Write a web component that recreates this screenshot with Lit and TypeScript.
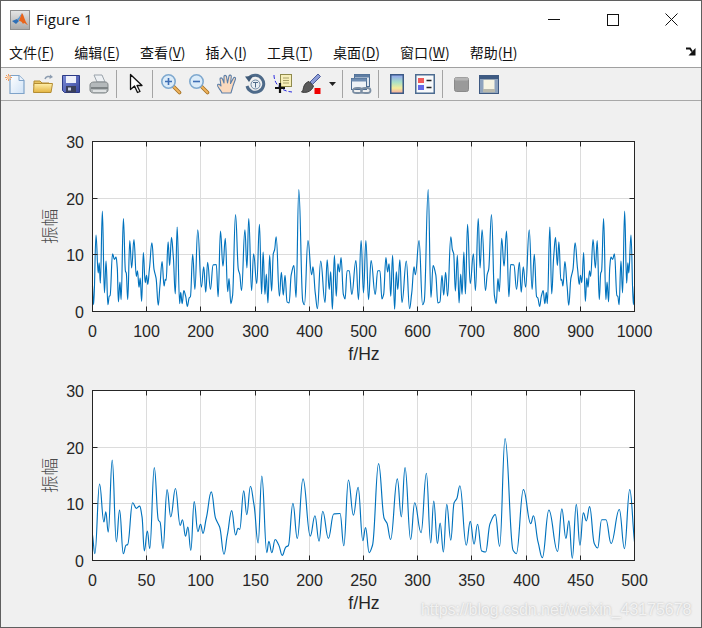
import { LitElement, html, css, svg } from "lit";
import { customElement, property } from "lit/decorators.js";

const RAW: number[][] = [[0,4.5],[2.2,1.2],[6.5,13.5],[10.5,6.8],[12.3,8.6],[14.5,5],[18.2,17.7],[22,3.3],[25,8.9],[28.4,1.2],[30.9,2.7],[32.4,2.8],[37,10.2],[40.4,9.2],[43.5,9.6],[45.7,7.7],[47.8,1.7],[50.6,5.2],[52.8,2.1],[57,16.4],[60.8,7.1],[62.3,6.8],[65,2.1],[68.8,12.5],[72.2,7.7],[76.5,12.7],[80.9,6.2],[83,7.2],[85.8,4.3],[88,5.9],[90.7,1.8],[93.8,10.4],[97.2,5.1],[99.7,6.4],[101.9,4.8],[105,7.5],[109.6,12.1],[113.6,7.4],[117.3,5.9],[121.3,1.1],[124.4,4.5],[128.4,8.8],[132,4.5],[134.3,5.7],[135.8,5.5],[139.5,12.3],[142.3,8.1],[145.7,13.1],[149,9.8],[152.8,3.1],[156.2,14.9],[160.8,1.4],[162.7,3.4],[165.4,1.4],[168.5,3.7],[171.9,2.7],[175,0.9],[178.4,2.4],[180.6,2.6],[184.9,10.1],[188.9,3.9],[194.2,14.4],[200.9,4.3],[205.2,7.9],[209,3.4],[212.4,8.7],[217.6,3.9],[222.5,8.2],[228.4,8.3],[231.8,2.6],[236.1,14.2],[240.7,8],[245,12.9],[249.4,3.5],[251.9,5.8],[255.2,1.4],[258.3,2.7],[263.9,17.1],[269.1,7.4],[271.6,6.6],[275,3.7],[281.2,14.4],[284.9,7.7],[288.3,16.4],[293.5,3.7],[297.2,10.2],[303.1,4.9],[308,15.4],[312,3.1],[314.8,10.5],[318.2,3],[320.7,6.6],[323.7,1.5],[326.8,9.9],[330.5,3.6],[333.6,10.2],[336,10.9],[338.9,13.2],[344.8,2.7],[348.5,6.9],[352,2.9],[355.2,6.4],[359,1.7],[362.7,1.5],[366.7,6.5],[371.6,8.1],[375.6,2.5],[380.6,21.5],[388,1.8],[391,1.2],[397.5,12.5],[404.3,6.5],[406.8,7.9],[411,3.3],[415,0.5],[421,8.9],[429,1.6],[433,9.1],[436.7,3.9],[439.5,7],[442.6,0.4],[446.3,9.9],[449.7,2.7],[452.8,8.4],[455.6,7],[458.6,9.5],[462.9,3],[466,2.2],[469.7,7.2],[473.7,7.2],[478.4,3],[486,9],[490.7,2.1],[495.6,12.5],[500,3.3]];

const AX = { l: 91.5, r: 633.5, t: 10.5, b: 180.5 };

function curve(points: number[][], xMax: number): string {
  const pts = points.map(([h, a]) => [AX.l + (h / xMax) * (AX.r - AX.l), AX.b - (a / 30) * (AX.b - AX.t)]);
  const n = pts.length;
  const d: number[] = [];
  for (let i = 0; i < n - 1; i++) d.push((pts[i + 1][1] - pts[i][1]) / (pts[i + 1][0] - pts[i][0]));
  const m: number[] = [d[0]];
  for (let i = 1; i < n - 1; i++) {
    m.push(d[i - 1] * d[i] <= 0 ? 0 : (2 * d[i - 1] * d[i]) / (d[i - 1] + d[i]));
  }
  m.push(d[n - 2]);
  let p = `M${pts[0][0].toFixed(2)} ${pts[0][1].toFixed(2)}`;
  for (let i = 0; i < n - 1; i++) {
    const dx = pts[i + 1][0] - pts[i][0];
    const h = dx * 0.42;
    const s0 = m[i] * dx / 3;
    const s1 = m[i + 1] * dx / 3;
    p += `C${(pts[i][0] + h).toFixed(2)} ${(pts[i][1] + s0).toFixed(2)} ${(pts[i + 1][0] - h).toFixed(2)} ${(pts[i + 1][1] - s1).toFixed(2)} ${pts[i + 1][0].toFixed(2)} ${pts[i + 1][1].toFixed(2)}`;
  }
  return p;
}

@customElement("plot-axes")
class PlotAxes extends LitElement {
  @property({ type: Number }) xMax = 1000;
  @property({ type: Number }) step = 100;
  @property({ type: Boolean }) mirror = false;
  static styles = css`
    :host { display: block; height: 232px; }
    svg { display: block; }
    .tick { font: 16px "Liberation Sans", Arial, sans-serif; fill: #262626; }
    .xlab { font: 17.6px "Liberation Sans", Arial, sans-serif; fill: #262626; }
    .ylab { font: 300 17.6px "Noto Sans CJK SC", sans-serif; fill: #4a4a4a; }
    .grid { stroke: #dcdcdc; stroke-width: 1; fill: none; }
    .frame { stroke: #262626; stroke-width: 1; fill: none; }
    .line { stroke: #0072bd; stroke-width: 1.15; fill: none; stroke-linejoin: round; }
  `;
  render() {
    const xs: number[] = [];
    for (let v = 0; v <= this.xMax; v += this.step) xs.push(v);
    const px = (v: number) => Math.round(AX.l + (v / this.xMax) * (AX.r - AX.l) - 0.5) + 0.5;
    const ys = [0, 10, 20, 30];
    const py = (v: number) => Math.round(AX.b - (v / 30) * (AX.b - AX.t) - 0.5) + 0.5;
    const data = this.mirror
      ? [...RAW, ...RAW.slice(0, -1).reverse().map(([h, a]) => [1000 - h, a])]
      : RAW;
    return html`<svg width="700" height="232" viewBox="0 0 700 232">
      <rect x=${AX.l} y=${AX.t} width=${AX.r - AX.l} height=${AX.b - AX.t} fill="#fff"></rect>
      ${xs.slice(1, -1).map((v) => svg`<path class="grid" d="M${px(v)} ${AX.t}V${AX.b}"></path>`)}
      ${ys.slice(1, -1).map((v) => svg`<path class="grid" d="M${AX.l} ${py(v)}H${AX.r}"></path>`)}
      <path class="line" d=${curve(data, this.xMax)}></path>
      <rect class="frame" x=${AX.l} y=${AX.t} width=${AX.r - AX.l} height=${AX.b - AX.t}></rect>
      ${xs.slice(1, -1).map((v) => svg`<path class="frame" d="M${px(v)} ${AX.b}v-5M${px(v)} ${AX.t}v5"></path>`)}
      ${ys.slice(1, -1).map((v) => svg`<path class="frame" d="M${AX.l} ${py(v)}h5M${AX.r} ${py(v)}h-5"></path>`)}
      ${xs.map((v) => svg`<text class="tick" x=${px(v)} y="205.5" text-anchor="middle">${v}</text>`)}
      ${ys.map((v) => svg`<text class="tick" x="83" y=${py(v) + 6} text-anchor="end">${v}</text>`)}
      <text class="xlab" x="363" y="228.5" text-anchor="middle">f/Hz</text>
      <text class="ylab" transform="translate(55 ${(AX.t + AX.b) / 2}) rotate(-90)" text-anchor="middle">振幅</text>
    </svg>`;
  }
}

const ICONS: Record<string, unknown> = {
  new: html`<svg width="22" height="22" viewBox="0 0 22 22">
    <defs><linearGradient id="pg" x1="0" y1="0" x2="1" y2="1"><stop offset="0" stop-color="#fff"/><stop offset="1" stop-color="#cfe2f6"/></linearGradient></defs>
    <path d="M6 2.500h9l5 5v13H6z" fill="url(#pg)" stroke="#7fa3c9" stroke-width="1.200"/><path d="M15 2.500v5h5" fill="#eaf2fb" stroke="#7fa3c9"/>
    <path d="M4.500 1v7M1 4.500h7M2 2l5 5M7 2L2 7" stroke="#ef9a5d" stroke-width="1"/><circle cx="4.500" cy="4.500" r="1.800" fill="#f6c9a0"/></svg>`,
  open: html`<svg width="22" height="22" viewBox="0 0 22 22">
    <defs><linearGradient id="fg" x1="0" y1="0" x2="0" y2="1"><stop offset="0" stop-color="#fff0ac"/><stop offset="1" stop-color="#e3b33f"/></linearGradient></defs>
    <path d="M13 6c1-3 4-3 6-2" fill="none" stroke="#8c9cb0" stroke-width="1.500"/><path d="M18 1.500l3 2.500-3.500 2z" fill="#8c9cb0"/>
    <path d="M2 8h6l2 2h7v3H2z" fill="#e7c464" stroke="#b48d33"/><path d="M1.500 19.500L2 10.500h18.500l-1.500 9z" fill="url(#fg)" stroke="#b48d33"/></svg>`,
  save: html`<svg width="22" height="22" viewBox="0 0 22 22">
    <defs><linearGradient id="sg" x1="0" y1="0" x2="1" y2="1"><stop offset="0" stop-color="#7c8cd8"/><stop offset="1" stop-color="#38469c"/></linearGradient></defs>
    <path d="M2.500 2.500h17v17h-15l-2-2z" fill="url(#sg)" stroke="#2c3a86"/><rect x="6" y="3" width="10" height="7" fill="#eef0fa"/><rect x="6" y="13" width="10" height="6.500" fill="#3a3f5a"/><rect x="8" y="14.500" width="3" height="3" fill="#c8cde0"/></svg>`,
  print: html`<svg width="22" height="22" viewBox="0 0 22 22">
    <path d="M6 2h8l3 7H9z" fill="#eef1f4" stroke="#9aa3ab"/><path d="M2 12c0-2 2-3 4-3h11c2 0 3 1 3 3v5c0 2-2 3-4 3H6c-2 0-4-1-4-3z" fill="#b4b9bb" stroke="#7f8587"/><path d="M3 14h17v2H3z" fill="#7d8385"/><path d="M5 17h13v2H5z" fill="#dfe2e3"/></svg>`,
  pointer: html`<svg width="16" height="22" viewBox="0 0 16 22">
    <path d="M2.500 1.500v15l4-3.500 3 6.500 2.500-1-3-6h5z" fill="#fff" stroke="#111" stroke-width="1.300" stroke-linejoin="round"/></svg>`,
  zoomin: html`<svg width="22" height="22" viewBox="0 0 22 22">
    <path d="M12.500 12.500l7 7" stroke="#a57224" stroke-width="3.600" stroke-linecap="round"/><path d="M12.500 12.500l7 7" stroke="#f0b45e" stroke-width="1.800" stroke-linecap="round"/>
    <circle cx="8.500" cy="8.500" r="6.700" fill="#dcecf9" stroke="#7fa9cf" stroke-width="1.600"/><path d="M5 8.500h7M8.500 5v7" stroke="#3f6fb5" stroke-width="1.600"/></svg>`,
  zoomout: html`<svg width="22" height="22" viewBox="0 0 22 22">
    <path d="M12.500 12.500l7 7" stroke="#a57224" stroke-width="3.600" stroke-linecap="round"/><path d="M12.500 12.500l7 7" stroke="#f0b45e" stroke-width="1.800" stroke-linecap="round"/>
    <circle cx="8.500" cy="8.500" r="6.700" fill="#dcecf9" stroke="#7fa9cf" stroke-width="1.600"/><path d="M5 8.500h7" stroke="#3f6fb5" stroke-width="1.600"/></svg>`,
  hand: html`<svg width="22" height="22" viewBox="0 0 22 22">
    <path d="M6 20c-1-3-5-6-4.500-8 .5-1.500 2.500-.5 3.500 1L4 6c0-1.500 2-1.500 2.500 0L8 10 8 3.500c0-1.500 2-1.500 2.500 0L11.500 10 13 3c.5-1.500 2.500-1 2.300.5L14.500 10.500l3-5.500c.7-1.200 2.500-.5 2 1L17 13c-.5 2.500-1.500 4.500-2 7z" fill="#fbd9bd" stroke="#5c7fa8" stroke-width="1.100" stroke-linejoin="round"/></svg>`,
  rotate: html`<svg width="22" height="22" viewBox="0 0 22 22">
    <path d="M5 5a8.500 8.500 0 1 1-2 8" fill="none" stroke="#4e6a89" stroke-width="3"/><path d="M1 3.500l8-.5-4 6z" fill="#3f5a78"/>
    <circle cx="11.500" cy="11.500" r="4.500" fill="#e8eef4" stroke="#6d87a3"/><path d="M9 9.500h5M11.500 9.500v5" stroke="#4e6a89" stroke-width="1"/></svg>`,
  cursor: html`<svg width="22" height="22" viewBox="0 0 22 22">
    <rect x="8.500" y="1.500" width="11" height="12" fill="#f7efb9" stroke="#8f8a4c"/><path d="M11 5h6M11 7.500h6M11 10h6" stroke="#a9a26a"/>
    <path d="M2 2c0 7 5 16 18 17" fill="none" stroke="#2a2ae0" stroke-width="1" stroke-dasharray="4 2"/>
    <path d="M8 10v10M3 15h10" stroke="#111" stroke-width="2.200"/></svg>`,
  brush: html`<svg width="22" height="22" viewBox="0 0 22 22">
    <path d="M10 9l8-8 2.500 2.500-8 8z" fill="#8c9cd6" stroke="#4c5c9c"/>
    <path d="M9 8.500l4.500 4.500c-1 3-3 5-6 6-2 .5-4.500.5-6 0 2-1.500 1.500-3.500 2.500-6 1-2.500 3-4 5-4.500z" fill="#5a5a5a" stroke="#3a3a3a"/>
    <rect x="14.500" y="15" width="6" height="6" fill="#f00000"/></svg>`,
  caret: html`<svg width="7" height="4" viewBox="0 0 7 4"><path d="M0 0h7L3.500 4z" fill="#222"/></svg>`,
  link: html`<svg width="22" height="22" viewBox="0 0 22 22">
    <rect x="4.500" y="1.500" width="15" height="12" fill="#dfe6ee" stroke="#4d6c91"/><rect x="4.500" y="1.500" width="15" height="3" fill="#5e7da3"/>
    <rect x="1.500" y="5.500" width="15" height="11" fill="#eef2f6" stroke="#4d6c91"/><rect x="1.500" y="5.500" width="15" height="3" fill="#6e8cb1"/>
    <path d="M3 18c0-2 2-3 4-3h2c2 0 3 1 3 2.500S10.500 20 9 20H6.500C4 20 3 19 3 18zM11 18c0-2 2-3 4-3h2.500c2 0 3 1 3 2.500s-1.500 2.500-3 2.500H15c-2.500 0-4-1-4-2z" fill="none" stroke="#7b8ea3" stroke-width="1.800"/></svg>`,
  colorbar: html`<svg width="14" height="20" viewBox="0 0 14 20">
    <defs><linearGradient id="cb" x1="0" y1="0" x2="0" y2="1"><stop offset="0" stop-color="#8fa0f0"/><stop offset=".4" stop-color="#a8e0c8"/><stop offset=".72" stop-color="#f4ec9a"/><stop offset="1" stop-color="#f5a8a0"/></linearGradient></defs>
    <rect x=".75" y=".75" width="12.500" height="18.500" fill="url(#cb)" stroke="#3c5a86" stroke-width="1.500"/></svg>`,
  legend: html`<svg width="20" height="20" viewBox="0 0 20 20">
    <rect x=".75" y=".75" width="18.500" height="18.500" fill="#f7f9fb" stroke="#4d6c91" stroke-width="1.500"/>
    <rect x="3" y="4" width="6" height="5" fill="#ef5a5a"/><rect x="3" y="11" width="6" height="5" fill="#6468e8"/><path d="M11.500 6.500h5M11.500 13.500h5" stroke="#222" stroke-width="1.500"/></svg>`,
  gray: html`<svg width="15" height="15" viewBox="0 0 15 15"><rect x=".5" y=".5" width="14" height="14" rx="2" fill="#9a9a9a" stroke="#8a8a8a"/><rect x=".5" y=".5" width="14" height="3" rx="1.500" fill="#b5b5b5"/></svg>`,
  dock: html`<svg width="20" height="19" viewBox="0 0 20 19"><rect x=".75" y=".75" width="18.500" height="17.500" fill="#f6f4e2" stroke="#3e5a82" stroke-width="1.500"/><rect x="1" y="1" width="18" height="3.500" fill="#3e5a82"/><rect x="1" y="4" width="3.500" height="14" fill="#8ea3bd"/><rect x="15.500" y="4" width="3.500" height="14" fill="#8ea3bd"/><rect x="4" y="14" width="12" height="3" fill="#b9b9ac"/></svg>`,
};

@customElement("app-root")
class AppRoot extends LitElement {
  static styles = css`
    :host {
      display: flex; flex-direction: column; position: relative; box-sizing: border-box;
      width: 702px; height: 628px; background: #f0f0f0; border: 1px solid #5f5f5f; overflow: hidden;
    }
    .title { height: 37px; background: #fff; display: flex; align-items: center; flex: none; padding-left: 9px; }
    .logo { width: 20px; height: 20px; display: block; margin-right: 6px; }
    .title-text { font: 15px "Open Sans", "Noto Sans", sans-serif; color: #111; letter-spacing: .1px; flex: 1; padding-bottom: 2px; }
    .win { display: flex; align-items: center; }
    .win span { width: 59px; height: 20px; display: flex; justify-content: center; align-items: center; }
    .menu { height: 27px; padding-bottom: 2px; background: #fff; display: flex; align-items: center; gap: 20px; padding-left: 8px; flex: none; position: relative;
      font: 14px "Noto Sans CJK SC", "Noto Sans", sans-serif; color: #111; border-bottom: 1px solid #a0a0a0; }
    .menu u { text-underline-offset: 2px; }
    .menu-arrow { margin-left: auto; margin-right: 5px; display: block; }
    .tools { height: 32px; display: flex; align-items: center; flex: none; padding-left: 0; border-bottom: 1px solid #a8a8a8; }
    .cell { width: 28px; height: 28px; display: flex; align-items: center; justify-content: center; flex: none; }
    .cell.wide { width: 30px; }
    .cell.small { width: 15px; }
    .sep { width: 1px; height: 28px; background: #a4a4a4; margin: 0 4px 0 3px; flex: none; }
    .sep.tight { margin-left: 1px; }
    .sep.mid { margin-left: 2px; }
    .plots { display: flex; flex-direction: column; gap: 17px; padding-top: 30px; }
    .mark { position: absolute; left: 420px; bottom: 8px; font: 16px "Liberation Sans", Arial, sans-serif; letter-spacing: -.05px;
      color: rgba(255,255,255,.75); text-shadow: 0 0 2px rgba(120,120,120,.5); }
  `;
  cell(name: string, cls = "") {
    return html`<div class="cell ${cls}">${ICONS[name]}</div>`;
  }
  render() {
    const menus: [string, string][] = [["文件", "F"], ["编辑", "E"], ["查看", "V"], ["插入", "I"], ["工具", "T"], ["桌面", "D"], ["窗口", "W"], ["帮助", "H"]];
    return html`
      <div class="title">
        <svg class="logo" viewBox="0 0 20 20">
          <defs><linearGradient id="lg" x1="0" y1="0" x2="0" y2="1"><stop offset="0" stop-color="#e6e6e6"/><stop offset="1" stop-color="#a9a9a9"/></linearGradient></defs>
          <rect x=".5" y=".5" width="19" height="19" fill="url(#lg)" stroke="#8f8f8f"/>
          <path d="M2 11l5-2 2 2-3 3z" fill="#2f6fb5"/><path d="M7 9c2-1 3-4 5-6l-3 8z" fill="#5b9bd5"/>
          <path d="M12 3c2 2 3 9 6 12-2-.5-3-2-4-2l-1 1c-1-2-2-3-4-3 1-3 2-6 3-8z" fill="#e8641b"/></svg>
        <span class="title-text">Figure 1</span>
        <div class="win">
          <span><svg width="12" height="1" viewBox="0 0 12 1"><rect width="12" height="1" fill="#111"/></svg></span>
          <span><svg width="12" height="12" viewBox="0 0 12 12"><rect x=".5" y=".5" width="11" height="11" fill="none" stroke="#111"/></svg></span>
          <span><svg width="13" height="13" viewBox="0 0 13 13"><path d="M.5.5l12 12M12.500.5l-12 12" stroke="#111" fill="none"/></svg></span>
        </div>
      </div>
      <div class="menu">
        ${menus.map(([t, k]) => html`<span>${t}(<u>${k}</u>)</span>`)}
        <svg class="menu-arrow" width="10" height="9" viewBox="0 0 10 9"><path d="M0 1.500l4 0 2 3" fill="none" stroke="#111" stroke-width="1.800"/><path d="M9.500 1v7.500H2.500z" fill="#111"/></svg>
      </div>
      <div class="tools">
        ${this.cell("new")}${this.cell("open")}${this.cell("save")}${this.cell("print")}
        <div class="sep"></div>
        ${this.cell("pointer", "wide")}
        <div class="sep tight"></div>
        ${this.cell("zoomin")}${this.cell("zoomout")}${this.cell("hand")}${this.cell("rotate")}${this.cell("cursor")}${this.cell("brush")}${this.cell("caret", "small")}
        <div class="sep mid"></div>
        ${this.cell("link")}
        <div class="sep"></div>
        ${this.cell("colorbar")}${this.cell("legend")}
        <div class="sep"></div>
        ${this.cell("gray")}${this.cell("dock")}
      </div>
      <div class="plots">
        <plot-axes .xMax=${1000} .step=${100} .mirror=${true}></plot-axes>
        <plot-axes .xMax=${500} .step=${50}></plot-axes>
      </div>
      <div class="mark">https://blog.csdn.net/weixin_43175678</div>
    `;
  }
}
